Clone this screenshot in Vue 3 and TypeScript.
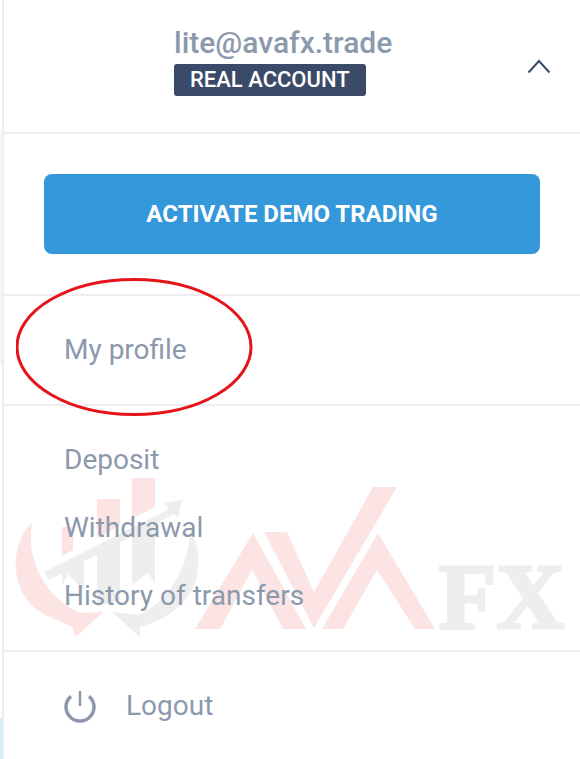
<script setup lang="ts">
const transfers: string[] = ['Deposit', 'Withdrawal', 'History of transfers']
</script>

<template>
  <div class="panel">
    <i class="rail"></i>
    <i class="edge-gray"></i>
    <i class="edge-blue"></i>
    <svg class="watermark" width="580" height="759" viewBox="0 0 580 759" aria-hidden="true">
      <g fill="#fde4e4">
        <path d="M32 523C8 545 8 600 50 617L72 627L76 637L103 612L80 613C50 600 25 565 32 523Z" />
        <path d="M62 527H73V550L62 556Z" />
        <path d="M97 499H120V526L97 538Z" />
        <path d="M132 478H155V507L132 519Z" />
        <path d="M195 629L253 533L306 629H283L252 570L220 629Z" />
        <path d="M264 532L287 532L314 592L373 487H397L314 628Z" />
        <path d="M322 629L378 533L435 629H415L377 570L343 629Z" />
      </g>
      <g fill="#eeeeee">
        <path d="M190 528C208 565 200 610 140 627L140 637L112 612L138 615C165 605 190 570 190 528Z" />
        <path d="M182 500L164 503L169 509L44 572L49 580L174 514L178 518Z" />
        <path d="M62 573L84 558V590L68 574L62 585Z" />
        <path d="M97 546L120 534V600L97 607Z" />
        <path d="M132 533L155 521V583L148 573L132 585Z" />
        <text class="fx" x="439" y="628">FX</text>
      </g>
    </svg>

    <header class="account">
      <div class="identity">
        <div class="email">lite@avafx.trade</div>
        <span class="badge">REAL ACCOUNT</span>
      </div>
      <svg class="chevron" width="24" height="16" viewBox="0 0 24 16" aria-hidden="true">
        <path d="M1.500 14.500L12 3L22.500 14.500" fill="none" stroke="#3b4a68" stroke-width="2" />
      </svg>
    </header>

    <section class="activate">
      <button class="cta" type="button">ACTIVATE DEMO TRADING</button>
    </section>

    <section class="profile">
      <a class="link">My profile</a>
      <svg class="ring" width="240" height="140" viewBox="0 0 240 140" aria-hidden="true">
        <ellipse cx="118" cy="69" rx="117" ry="67.500" fill="none" stroke="#e5141b" stroke-width="3" />
      </svg>
    </section>

    <section class="transfers">
      <a v-for="item in transfers" :key="item" class="link">{{ item }}</a>
    </section>

    <footer class="logout">
      <svg width="34" height="36" viewBox="0 0 34 36" aria-hidden="true">
        <path d="M8 8.300A14 14 0 1 0 26 8.300" fill="none" stroke="#8c99ad" stroke-width="3.500" />
        <path d="M17 3V18" fill="none" stroke="#8c99ad" stroke-width="2.500" />
      </svg>
      <a class="link">Logout</a>
    </footer>
  </div>
</template>

<style>
html, body { background: #fff; }
</style>

<style scoped>
.panel {
  position: relative;
  box-sizing: border-box;
  width: 580px;
  height: 759px;
  overflow: hidden;
  background: #fff;
  padding-left: 3px;
  font-family: Roboto, "Liberation Sans", sans-serif;
}
.rail { position: absolute; left: 2px; top: 0; bottom: 0; width: 2px; background: #eeeeee; }
.edge-gray { position: absolute; left: 0; top: 133px; width: 2px; height: 232px; background: #f5f5f5; }
.edge-blue { position: absolute; left: 0; top: 718px; bottom: 0; width: 2px; background: #d6eefb; }
.watermark { position: absolute; left: 0; top: 0; }
.fx { font-family: "Liberation Serif", serif; font-weight: 700; font-size: 94px; stroke: #eee; stroke-width: 3px; }
.account, .activate, .profile, .transfers, .logout { position: relative; box-sizing: border-box; }
.account {
  display: flex;
  align-items: center;
  height: 134px;
  padding: 0 29px 0 171px;
  border-bottom: 2px solid #eeeeee;
  justify-content: space-between;
}
.identity { display: flex; flex-direction: column; align-items: flex-start; margin-top: -11px; }
.email { color: #8c99ad; font-size: 30px; font-weight: 500; line-height: 34px; }
.badge {
  margin-top: 4px;
  padding: 0 16px;
  height: 32px;
  line-height: 32px;
  background: #3b4a68;
  border-radius: 3px;
  color: #fff;
  font-size: 22px;
  font-weight: 500;
}
.activate {
  height: 162px;
  padding: 40px 40px 40px 41px;
  border-bottom: 2px solid #eeeeee;
}
.cta {
  display: block;
  width: 100%;
  height: 80px;
  border: 0;
  border-radius: 8px;
  background: #3498db;
  color: #fff;
  font-family: inherit;
  font-size: 24px;
  font-weight: 700;
}
.link { color: #8c99ad; font-size: 28px; line-height: 34px; }
.profile {
  display: flex;
  align-items: center;
  height: 110px;
  padding-left: 61px;
  border-bottom: 2px solid #eeeeee;
}
.ring { position: absolute; left: 13px; top: -18px; }
.transfers {
  display: flex;
  flex-direction: column;
  gap: 34px;
  height: 246px;
  padding: 37px 0 0 61px;
  border-bottom: 2px solid #eeeeee;
}
.logout {
  display: flex;
  align-items: center;
  gap: 29px;
  height: 107px;
  padding-left: 60px;
}
</style>
